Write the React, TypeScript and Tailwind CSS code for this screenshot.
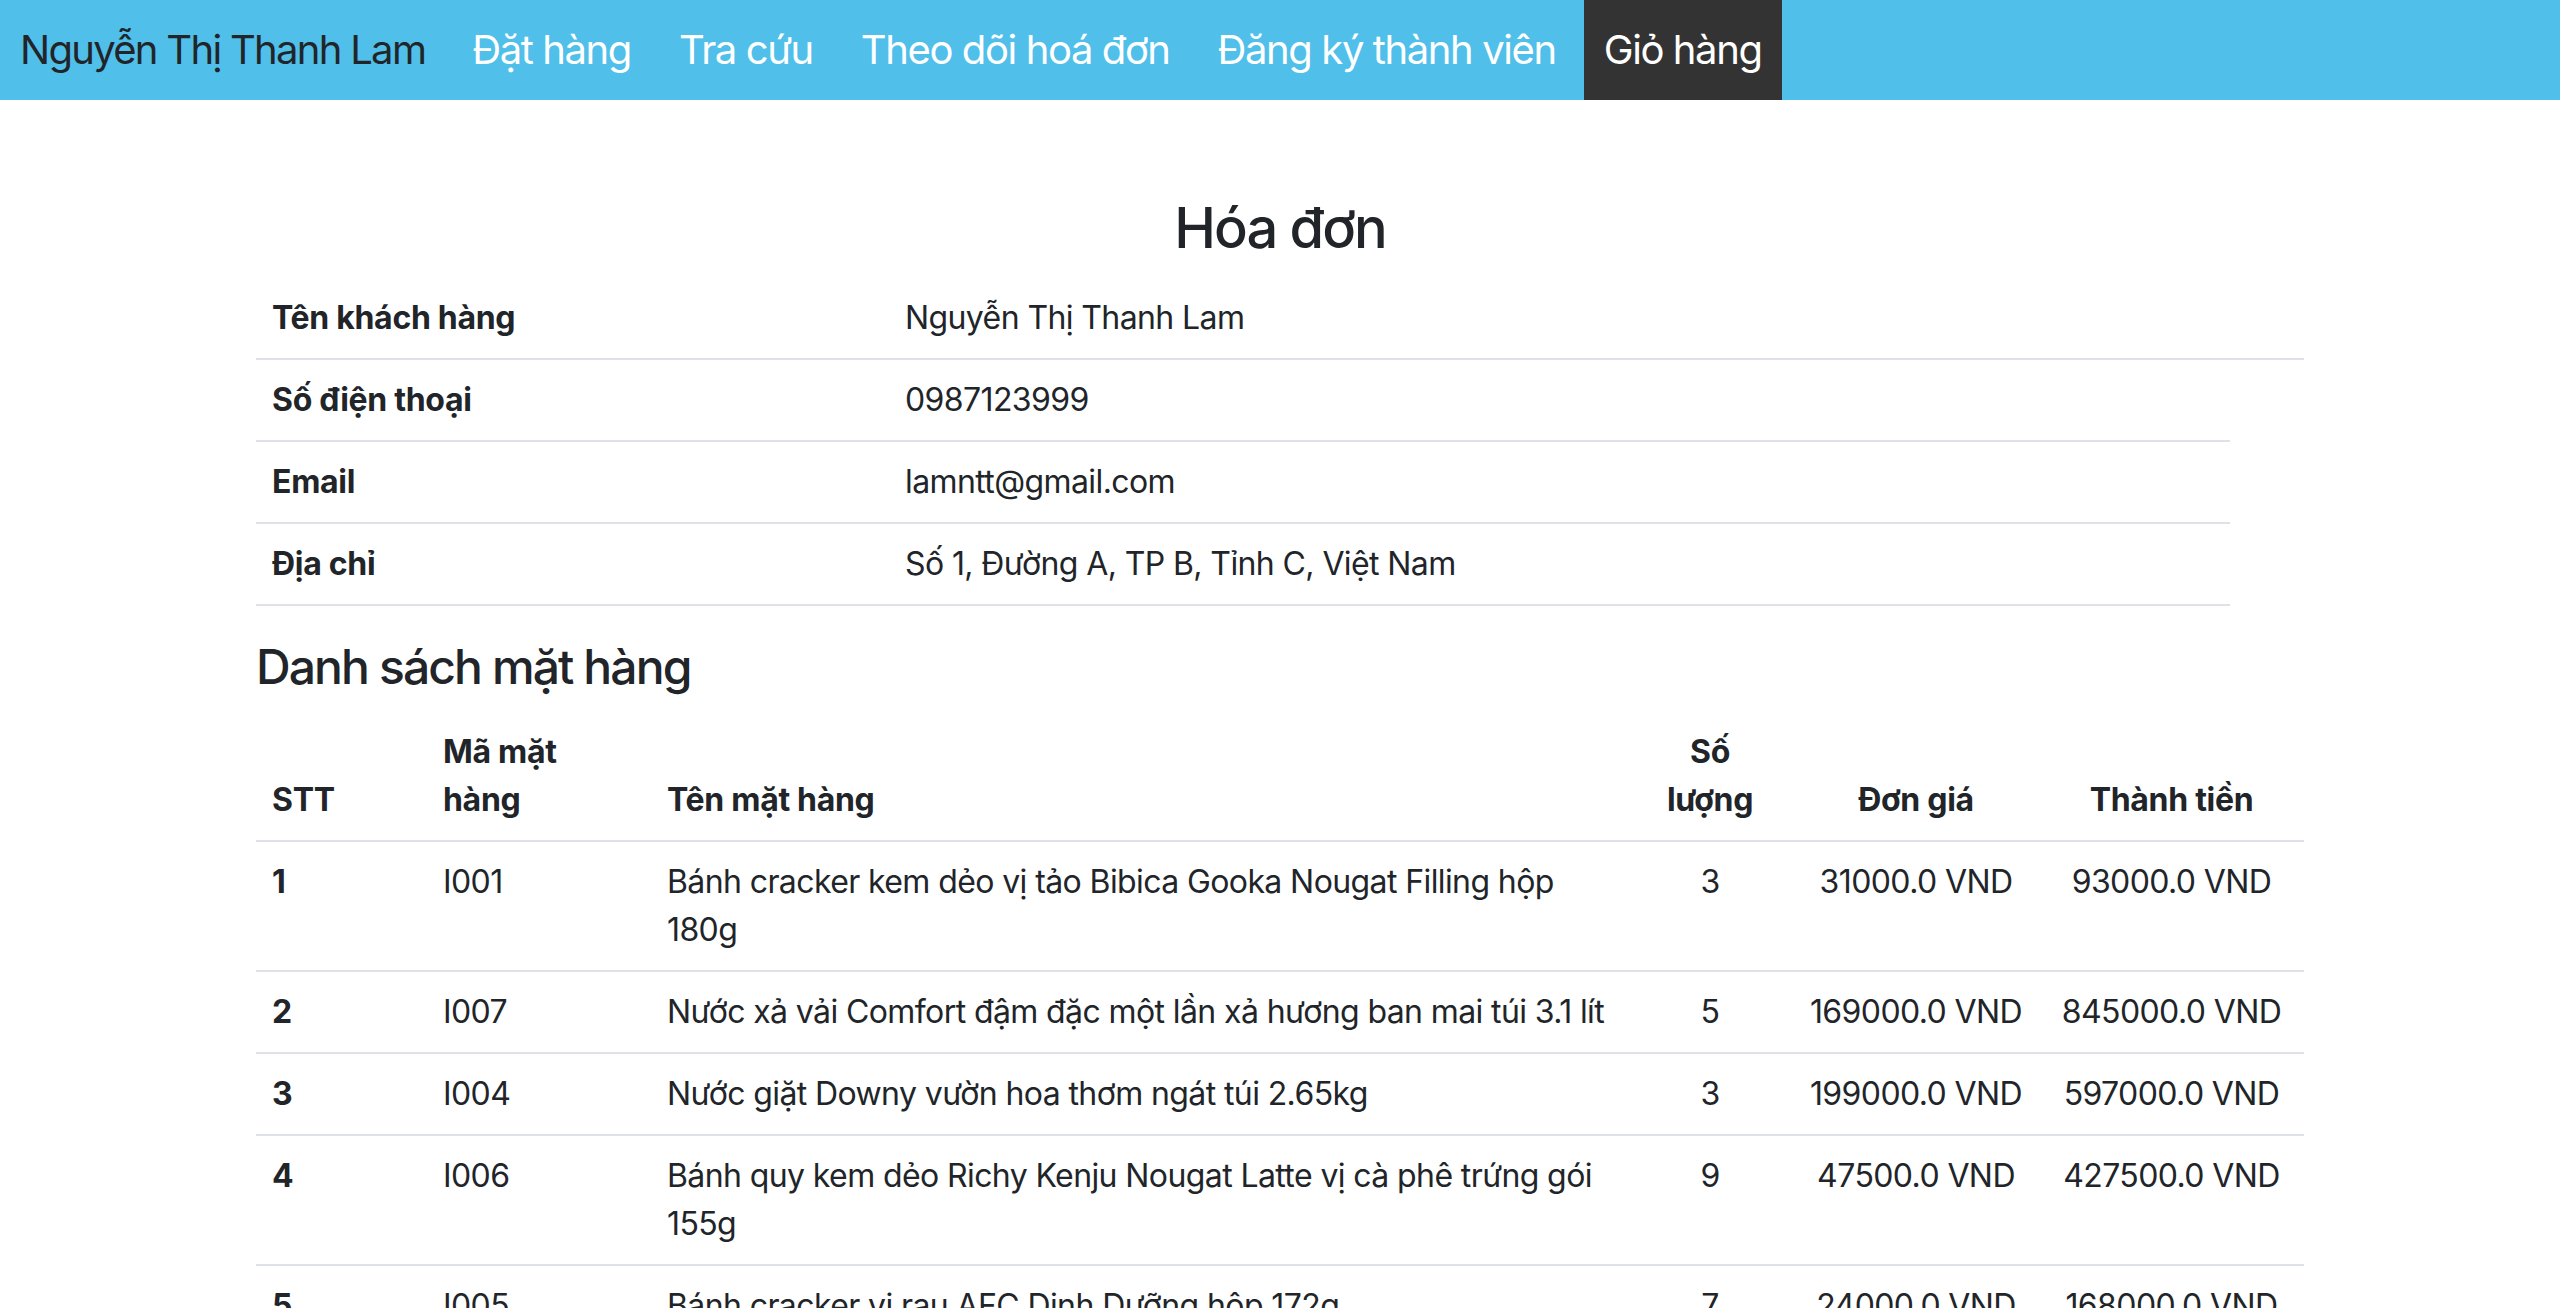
import React from "react";

const items = [
  { stt: "1", ma: "I001", ten: "Bánh cracker kem dẻo vị tảo Bibica Gooka Nougat Filling hộp 180g", sl: "3", dg: "31000.0 VND", tt: "93000.0 VND" },
  { stt: "2", ma: "I007", ten: "Nước xả vải Comfort đậm đặc một lần xả hương ban mai túi 3.1 lít", sl: "5", dg: "169000.0 VND", tt: "845000.0 VND" },
  { stt: "3", ma: "I004", ten: "Nước giặt Downy vườn hoa thơm ngát túi 2.65kg", sl: "3", dg: "199000.0 VND", tt: "597000.0 VND" },
  { stt: "4", ma: "I006", ten: "Bánh quy kem dẻo Richy Kenju Nougat Latte vị cà phê trứng gói 155g", sl: "9", dg: "47500.0 VND", tt: "427500.0 VND" },
  { stt: "5", ma: "I005", ten: "Bánh cracker vị rau AFC Dinh Dưỡng hộp 172g", sl: "7", dg: "24000.0 VND", tt: "168000.0 VND" },
];

const navItems = ["Đặt hàng", "Tra cứu", "Theo dõi hoá đơn", "Đăng ký thành viên"];

const cell = "border-b-2 border-[#dee2e6] px-[16px] py-[16px]";
const head = "border-b-2 border-[#dee2e6] px-[16px] py-[16px] font-bold tracking-[-0.3px]";

export default function App() {
  return (
    <div className="min-h-screen bg-white font-['Inter','Noto_Sans',sans-serif] text-[#212529]">
      <nav className="flex h-[100px] items-stretch bg-[#50bfea] pl-[20px]">
        <div className="mr-[27px] flex items-center text-[40px] leading-[60px] tracking-[-1.7px] text-[#212529]">
          Nguyễn Thị Thanh Lam
        </div>
        <div className="flex items-stretch gap-[8px]">
          {navItems.map((n) => (
            <div key={n} className="flex items-center px-[20px] text-[40px] leading-[60px] tracking-[-1.4px] text-white">
              {n}
            </div>
          ))}
          <div className="flex items-center bg-[#333333] px-[20px] text-[40px] leading-[60px] tracking-[-1.4px] text-white">
            Giỏ hàng
          </div>
        </div>
      </nav>

      <div className="mx-auto w-[2048px] pt-[95px]">
        <h3 className="mb-[16px] text-center text-[56px] font-medium leading-[67px] tracking-[-1.9px]">Hóa đơn</h3>
        <table className="mb-[32px] w-full table-fixed text-[32px] leading-[48px] tracking-[-0.6px]">
          <colgroup>
            <col className="w-[633px]" />
            <col className="w-[1341px]" />
            <col className="w-[74px]" />
          </colgroup>
          <tbody>
            <tr>
              <th className={head + " text-left"}>Tên khách hàng</th>
              <td className={cell}>Nguyễn Thị Thanh Lam</td>
              <td className={cell}></td>
            </tr>
            <tr>
              <th className={head + " text-left"}>Số điện thoại</th>
              <td className={cell}>0987123999</td>
            </tr>
            <tr>
              <th className={head + " text-left"}>Email</th>
              <td className={cell}>lamntt@gmail.com</td>
            </tr>
            <tr>
              <th className={head + " text-left"}>Địa chỉ</th>
              <td className={cell}>Số 1, Đường A, TP B, Tỉnh C, Việt Nam</td>
            </tr>
          </tbody>
        </table>

        <h4 className="mb-[16px] text-[48px] font-medium leading-[58px] tracking-[-1.9px]">Danh sách mặt hàng</h4>
        <table className="w-full table-fixed text-[32px] leading-[48px] tracking-[-0.6px]">
          <colgroup>
            <col className="w-[171px]" />
            <col className="w-[224px]" />
            <col className="w-[976px]" />
            <col className="w-[166px]" />
            <col className="w-[246px]" />
            <col className="w-[265px]" />
          </colgroup>
          <thead>
            <tr className="align-bottom">
              <th className={head + " text-left"}>STT</th>
              <th className={head + " text-left"}>Mã mặt<br />hàng</th>
              <th className={head + " text-left"}>Tên mặt hàng</th>
              <th className={head + " text-center"}>Số<br />lượng</th>
              <th className={head + " text-center"}>Đơn giá</th>
              <th className={head + " text-center"}>Thành tiền</th>
            </tr>
          </thead>
          <tbody>
            {items.map((it) => (
              <tr key={it.stt} className="align-top">
                <th className={head + " text-left"}>{it.stt}</th>
                <td className={cell}>{it.ma}</td>
                <td className={cell}>{it.ten}</td>
                <td className={cell + " text-center"}>{it.sl}</td>
                <td className="border-b-2 border-[#dee2e6] px-[8px] py-[16px] text-center whitespace-nowrap">{it.dg}</td>
                <td className="border-b-2 border-[#dee2e6] px-[8px] py-[16px] text-center whitespace-nowrap">{it.tt}</td>
              </tr>
            ))}
          </tbody>
        </table>
      </div>
    </div>
  );
}
